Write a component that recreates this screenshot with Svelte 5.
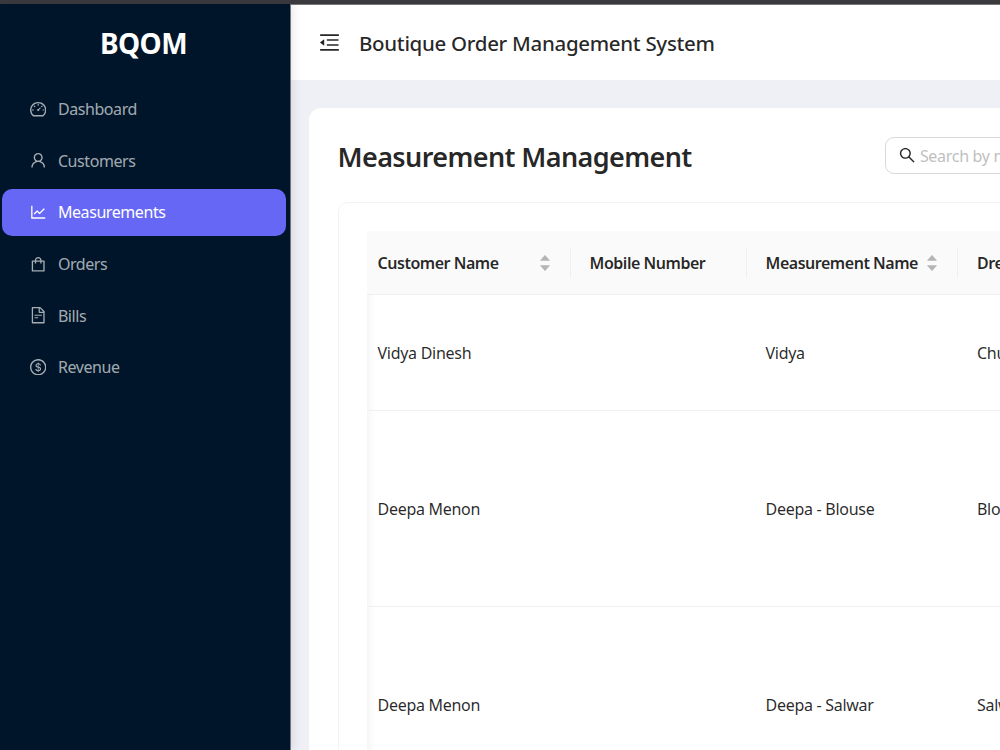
<script lang="ts">
  type Row = { customer: string; mobile: string; name: string; dress: string; height: number };

  let active = $state('Measurements');
  let search = $state('');

  const icons = {
    dashboard: 'M924.8 385.6a446.7 446.7 0 00-96-142.4 446.7 446.7 0 00-142.4-96C631.1 123.8 572.5 112 512 112s-119.1 11.8-174.4 35.2a446.7 446.7 0 00-142.4 96 446.7 446.7 0 00-96 142.4C75.8 440.9 64 499.5 64 560c0 132.7 58.3 257.7 159.9 343.1l1.7 1.4c5.8 4.8 13.1 7.5 20.6 7.5h531.7c7.5 0 14.8-2.7 20.6-7.5l1.7-1.4C901.7 817.7 960 692.7 960 560c0-60.5-11.9-119.1-35.2-174.4zM761.4 836H262.6A371.12 371.12 0 01140 560c0-99.4 38.7-192.8 109-263 70.3-70.3 163.7-109 263-109 99.4 0 192.8 38.7 263 109 70.3 70.3 109 163.7 109 263 0 105.6-44.5 205.5-122.6 276zM623.5 421.5a8.03 8.03 0 00-11.3 0L527.7 506c-18.7-5-39.4-.2-54.1 14.5a55.95 55.95 0 000 79.2 55.95 55.95 0 0079.2 0 55.87 55.87 0 0014.5-54.1l84.5-84.5c3.1-3.1 3.1-8.2 0-11.3l-28.3-28.3zM490 320h44c4.4 0 8-3.6 8-8v-80c0-4.4-3.6-8-8-8h-44c-4.4 0-8 3.6-8 8v80c0 4.4 3.6 8 8 8zm260 218v44c0 4.4 3.6 8 8 8h80c4.4 0 8-3.6 8-8v-44c0-4.4-3.6-8-8-8h-80c-4.4 0-8 3.6-8 8zm12.7-197.2l-31.1-31.1a8.03 8.03 0 00-11.3 0l-56.6 56.6a8.03 8.03 0 000 11.3l31.1 31.1c3.1 3.1 8.2 3.1 11.3 0l56.6-56.6c3.1-3.1 3.1-8.2 0-11.3zm-458.6-31.1a8.03 8.03 0 00-11.3 0l-31.1 31.1a8.03 8.03 0 000 11.3l56.6 56.6c3.1 3.1 8.2 3.1 11.3 0l31.1-31.1c3.1-3.1 3.1-8.2 0-11.3l-56.6-56.6zM262 530h-80c-4.4 0-8 3.6-8 8v44c0 4.4 3.6 8 8 8h80c4.4 0 8-3.6 8-8v-44c0-4.4-3.6-8-8-8z',
    user: 'M858.5 763.6a374 374 0 00-80.6-119.5 375.63 375.63 0 00-119.5-80.6c-.4-.2-.8-.3-1.2-.5C719.5 518 760 444.7 760 362c0-137-111-248-248-248S264 225 264 362c0 82.7 40.5 156 102.8 201.1-.4.2-.8.3-1.2.5-44.8 18.9-85 46-119.5 80.6a375.63 375.63 0 00-80.6 119.5A371.7 371.7 0 00136 901.8a8 8 0 008 8.2h60c4.4 0 7.9-3.5 8-7.8 2-77.2 33-149.5 87.8-204.3 56.7-56.7 132-87.9 212.2-87.9s155.5 31.2 212.2 87.9C779 752.7 810 825 812 902.2c.1 4.4 3.6 7.8 8 7.8h60a8 8 0 008-8.2c-1-47.8-10.9-94.3-29.5-138.2zM512 534c-45.9 0-89.1-17.9-121.6-50.4S340 407.9 340 362c0-45.9 17.9-89.1 50.4-121.6S466.1 190 512 190s89.1 17.9 121.6 50.4S684 316.1 684 362c0 45.9-17.9 89.1-50.4 121.6S557.9 534 512 534z',
    chart: 'M888 792H200V168c0-4.4-3.6-8-8-8h-56c-4.4 0-8 3.6-8 8v688c0 4.4 3.6 8 8 8h752c4.4 0 8-3.6 8-8v-56c0-4.4-3.6-8-8-8zM305.8 637.7c3.1 3.1 8.1 3.1 11.3 0l138.3-137.6L583 628.5c3.1 3.1 8.2 3.1 11.3 0l275.4-275.3c3.1-3.1 3.1-8.2 0-11.3l-39.6-39.6a8.03 8.03 0 00-11.3 0l-230 229.9L461.4 404a8.03 8.03 0 00-11.3 0L266.3 586.7a8.03 8.03 0 000 11.3l39.5 39.7z',
    bag: 'M832 312H696v-16c0-101.6-82.4-184-184-184s-184 82.4-184 184v16H192c-17.7 0-32 14.3-32 32v536c0 17.7 14.3 32 32 32h640c17.7 0 32-14.3 32-32V344c0-17.7-14.3-32-32-32zm-432-16c0-61.9 50.1-112 112-112s112 50.1 112 112v16H400v-16zm392 544H232V384h96v88c0 4.4 3.6 8 8 8h56c4.4 0 8-3.6 8-8v-88h224v88c0 4.4 3.6 8 8 8h56c4.4 0 8-3.6 8-8v-88h96v456z',
    file: 'M854.6 288.6L639.4 73.4c-6-6-14.1-9.4-22.6-9.4H192c-17.7 0-32 14.3-32 32v832c0 17.7 14.3 32 32 32h640c17.7 0 32-14.3 32-32V311.3c0-8.5-3.4-16.7-9.4-22.7zM790.2 326H602V137.8L790.2 326zm1.8 562H232V136h302v216a42 42 0 0042 42h216v494zM504 618H320c-4.4 0-8 3.6-8 8v48c0 4.4 3.6 8 8 8h184c4.4 0 8-3.6 8-8v-48c0-4.4-3.6-8-8-8zM312 490v48c0 4.4 3.6 8 8 8h384c4.4 0 8-3.6 8-8v-48c0-4.4-3.6-8-8-8H320c-4.4 0-8 3.6-8 8z',
    dollar: 'M512 64C264.6 64 64 264.6 64 512s200.6 448 448 448 448-200.6 448-448S759.4 64 512 64zm0 820c-205.4 0-372-166.6-372-372s166.6-372 372-372 372 166.6 372 372-166.6 372-372 372zm47.7-395.2l-25.4-5.9V348.6c38 5.2 61.5 29 65.5 58.2.5 4 3.9 6.9 7.9 6.9h44.9c4.7 0 8.4-4.1 8-8.8-6.1-62.3-57.4-102.3-125.9-109.2V263c0-4.4-3.6-8-8-8h-28.1c-4.4 0-8 3.6-8 8v33c-70.8 6.9-126.2 46-126.2 119 0 67.6 49.8 100.2 102.1 112.7l24.7 6.3v142.7c-44.2-5.9-69-29.5-74.1-61.3-.6-3.8-4-6.6-7.9-6.6H363c-4.7 0-8.4 4-8 8.7 4.5 55 46.2 105.6 135.2 112.1V761c0 4.4 3.6 8 8 8h28.4c4.4 0 8-3.6 8-8.1l-.2-31.7c78.3-6.9 134.3-48.8 134.3-124-.1-69.4-44.2-100.4-109-116.4zm-68.6-16.2c-5.6-1.6-10.3-3.1-15-5-33.8-12.2-49.5-31.9-49.5-57.3 0-36.3 27.5-57 64.5-61.7v124zM534.3 677V543.3c3.1.9 5.9 1.6 8.8 2.2 47.3 14.4 63.2 34.4 63.2 65.1 0 39.1-29.4 62.6-72 66.4z',
    fold: 'M408 442h480c4.4 0 8-3.6 8-8v-56c0-4.4-3.6-8-8-8H408c-4.4 0-8 3.6-8 8v56c0 4.4 3.6 8 8 8zm-8 204c0 4.4 3.6 8 8 8h480c4.4 0 8-3.6 8-8v-56c0-4.4-3.6-8-8-8H408c-4.4 0-8 3.6-8 8v56zm504-486H120c-4.4 0-8 3.6-8 8v56c0 4.4 3.6 8 8 8h784c4.4 0 8-3.6 8-8v-56c0-4.4-3.6-8-8-8zm0 632H120c-4.4 0-8 3.6-8 8v56c0 4.4 3.6 8 8 8h784c4.4 0 8-3.6 8-8v-56c0-4.4-3.6-8-8-8zM115.4 518.9L271.7 642c5.8 4.6 14.4.5 14.4-6.9V388.9c0-7.4-8.5-11.5-14.4-6.9L115.4 505.1a8.74 8.74 0 000 13.8z',
    search: 'M909.6 854.5L649.9 594.8C690.2 542.7 712 479 712 412c0-80.2-31.3-155.4-87.9-212.1-56.6-56.7-132-87.9-212.1-87.9s-155.5 31.3-212.1 87.9C143.2 256.5 112 331.8 112 412c0 80.1 31.3 155.5 87.9 212.1C256.5 680.8 331.8 712 412 712c67 0 130.6-21.8 182.7-62l259.7 259.6a8.2 8.2 0 0011.6 0l43.6-43.5a8.2 8.2 0 000-11.6zM570.4 570.4C528 612.7 471.8 636 412 636s-116-23.3-158.4-65.6C211.3 528 188 471.8 188 412s23.3-116.1 65.6-158.4C296 211.3 352.2 188 412 188s116.1 23.2 158.4 65.6S636 352.2 636 412s-23.3 116.1-65.6 158.4z'
  };

  const menu = [
    { label: 'Dashboard', icon: icons.dashboard },
    { label: 'Customers', icon: icons.user },
    { label: 'Measurements', icon: icons.chart },
    { label: 'Orders', icon: icons.bag },
    { label: 'Bills', icon: icons.file },
    { label: 'Revenue', icon: icons.dollar }
  ];

  const columns = [
    { title: 'Customer Name', sortable: true },
    { title: 'Mobile Number', sortable: false },
    { title: 'Measurement Name', sortable: true },
    { title: 'Dress Type', sortable: false }
  ];

  const rows: Row[] = [
    { customer: 'Vidya Dinesh', mobile: '', name: 'Vidya', dress: 'Chudidar', height: 116 },
    { customer: 'Deepa Menon', mobile: '', name: 'Deepa - Blouse', dress: 'Blouse', height: 196 },
    { customer: 'Deepa Menon', mobile: '', name: 'Deepa - Salwar', dress: 'Salwar', height: 196 }
  ];
</script>

{#snippet icon(path: string)}
  <svg viewBox="64 64 896 896" fill="currentColor" aria-hidden="true"><path d={path} /></svg>
{/snippet}

<div class="app">
  <div class="topline"></div>
  <div class="layout">
    <aside class="sider">
      <div class="logo">BQOM</div>
      <nav class="menu">
        {#each menu as item}
          <button class="menu-item" class:active={active === item.label} onclick={() => active = item.label}>
            {@render icon(item.icon)}
            <span>{item.label}</span>
          </button>
        {/each}
      </nav>
    </aside>

    <div class="main">
      <header class="header">
        <button class="fold" aria-label="Toggle menu">{@render icon(icons.fold)}</button>
        <span class="app-title">Boutique Order Management System</span>
      </header>

      <main class="content">
        <section class="panel">
          <div class="panel-head">
            <h2>Measurement Management</h2>
            <label class="search">
              {@render icon(icons.search)}
              <input bind:value={search} placeholder="Search by name or mobile" />
            </label>
          </div>

          <div class="card">
            <div class="table">
              <div class="row thead">
                {#each columns as col}
                  <div class="th">
                    <span>{col.title}</span>
                    {#if col.sortable}
                      <svg class="sorter" viewBox="0 0 10 16" aria-hidden="true">
                        <path d="M4.7.2.3 5.2q-.3.6.3.6h8.8q.6 0 .3-.6L5.3.2q-.3-.3-.6 0z" />
                        <path d="M.6 10.2h8.8q.6 0 .3.6l-4.4 5q-.3.3-.6 0l-4.4-5q-.3-.6.3-.6z" />
                      </svg>
                    {/if}
                  </div>
                {/each}
              </div>
              {#each rows as row}
                <div class="row" style="height: {row.height}px">
                  <div class="td">{row.customer}</div>
                  <div class="td">{row.mobile}</div>
                  <div class="td">{row.name}</div>
                  <div class="td">{row.dress}</div>
                </div>
              {/each}
            </div>
          </div>
        </section>
      </main>
    </div>
  </div>
</div>

<style>
  :global(body) {
    overflow: hidden;
  }

  .app {
    display: flex;
    flex-direction: column;
    width: 1000px;
    height: 750px;
    overflow: hidden;
    font-family: 'Noto Sans', 'Open Sans', sans-serif;
    font-size: 16px;
    color: rgba(0, 0, 0, 0.85);
  }

  button {
    border: 0;
    padding: 0;
    background: none;
    font: inherit;
    color: inherit;
    cursor: pointer;
  }

  .topline {
    flex: none;
    height: 4px;
    background: #3b3a3f;
    border-bottom: 1px solid #77767b;
  }

  .layout {
    display: flex;
    flex: 1;
    min-height: 0;
  }

  .sider {
    position: relative;
    z-index: 1;
    flex: none;
    box-sizing: border-box;
    width: 291px;
    margin-top: -1px;
    background: #001529;
    border-right: 1px solid #70767f;
    box-shadow: 2px 0 9px rgba(0, 0, 0, 0.1);
  }

  .logo {
    height: 80px;
    line-height: 79px;
    padding-right: 3px;
    text-align: center;
    font-size: 28px;
    font-weight: 700;
    letter-spacing: -0.6px;
    color: #fff;
  }

  .menu {
    display: flex;
    flex-direction: column;
    gap: 4.7px;
    padding: 1.3px 4.5px 0 1.5px;
  }

  .menu-item {
    display: flex;
    align-items: center;
    gap: 12px;
    height: 47px;
    padding-left: 28px;
    border-radius: 10px;
    letter-spacing: -0.42px;
    color: rgba(255, 255, 255, 0.65);
  }

  .menu-item span {
    padding-top: 0.5px;
  }

  .menu-item svg {
    width: 16.4px;
    height: 16.4px;
  }

  .menu-item.active {
    background: #6667f5;
    color: #fff;
  }

  .main {
    display: flex;
    flex-direction: column;
    flex: 1;
    min-width: 0;
    background: #eff0f5;
  }

  .header {
    display: flex;
    flex: none;
    align-items: center;
    gap: 19px;
    height: 75px;
    padding-left: 28px;
    background: #fff;
  }

  .fold svg {
    display: block;
    width: 21px;
    height: 21px;
  }

  .app-title {
    font-size: 20.5px;
    font-weight: 500;
    letter-spacing: -0.31px;
    white-space: nowrap;
  }

  .content {
    flex: 1;
    min-height: 0;
    padding: 28px 0 0 18px;
  }

  .panel {
    box-sizing: border-box;
    width: 1000px;
    height: 100%;
    padding: 29px 28px 0 28.5px;
    background: #fff;
    border-radius: 12px 0 0;
  }

  .panel-head {
    display: flex;
    align-items: center;
    height: 37px;
  }

  h2 {
    flex: none;
    width: 547px;
    margin: 0;
    padding-top: 2px;
    font-size: 27px;
    font-weight: 600;
    letter-spacing: -0.61px;
    white-space: nowrap;
  }

  .search {
    display: flex;
    align-items: center;
    gap: 5px;
    box-sizing: border-box;
    width: 300px;
    height: 37px;
    padding-left: 13px;
    border: 1px solid #d9d9d9;
    border-radius: 9px;
  }

  .search svg {
    flex: none;
    width: 16.4px;
    height: 16.4px;
  }

  input {
    flex: 1;
    min-width: 0;
    padding: 0;
    border: 0;
    outline: 0;
    background: none;
    font: inherit;
    letter-spacing: -0.3px;
  }

  input::placeholder {
    color: #bfbfbf;
  }

  .card {
    box-sizing: border-box;
    height: 620px;
    margin-top: 28px;
    padding: 28px;
    border: 1px solid #f3f3f3;
    border-radius: 10px;
  }

  .table {
    box-shadow: inset 10px 0 8px -8px rgba(5, 5, 5, 0.06);
  }

  .row {
    display: grid;
    grid-template-columns: 204px 176px 211.5px 211.5px;
    align-items: center;
    box-sizing: border-box;
    border-bottom: 1px solid #f0f0f0;
  }

  .thead {
    height: 64px;
    background: #fafafa;
    font-weight: 600;
  }

  .th,
  .td {
    padding-left: 19px;
    letter-spacing: -0.28px;
    white-space: nowrap;
  }

  .th {
    display: flex;
    align-items: center;
    justify-content: space-between;
    box-sizing: border-box;
    height: 30px;
    padding-right: 20px;
    border-right: 1px solid #f0f0f0;
    letter-spacing: -0.47px;
  }

  /* first column is scrolled slightly under the left edge */
  .th:first-child,
  .td:first-child {
    padding-left: 11px;
  }

  .sorter {
    width: 10px;
    height: 16px;
    fill: #b5b5b5;
  }
</style>
